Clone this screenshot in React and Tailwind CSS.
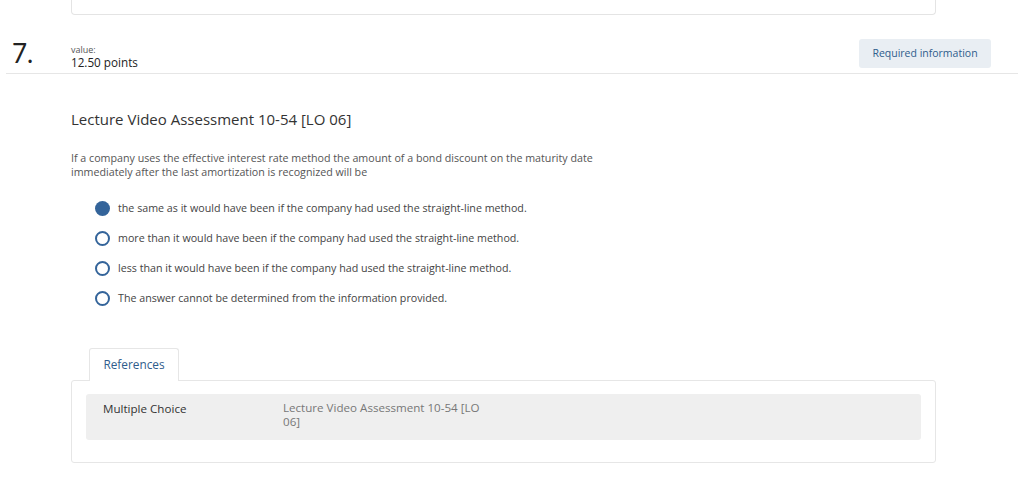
import React from "react";

const options = [
  "the same as it would have been if the company had used the straight-line method.",
  "more than it would have been if the company had used the straight-line method.",
  "less than it would have been if the company had used the straight-line method.",
  "The answer cannot be determined from the information provided.",
];

export default function App() {
  return (
    <div className="w-[1024px] h-[481px] overflow-hidden bg-white text-[#333]" style={{ fontFamily: "'Open Sans', Lato, sans-serif" }}>
      {/* top card remnant */}
      <div className="ml-[71px] w-[865px] h-[15px] border border-t-0 border-[#e4e4e4] rounded-b-[4px]" />

      {/* header row */}
      <div className="mx-[6px] mt-[24px] h-[35px] border-b border-[#e6e6e6] flex items-start">
        <div className="w-[65px] pl-[6px] text-[26px] leading-[27px] mt-[1px] text-[#222]" style={{ fontFamily: "Lato, sans-serif" }}>7.</div>
        <div className="flex-1 pt-[5px]">
          <div className="text-[9px] leading-[11px] text-[#555]">value:</div>
          <div className="text-[11.7px] leading-[14px] text-[#222]">12.50 points</div>
        </div>
        <div className="mr-[27px] h-[29px] w-[132px] rounded-[3px] bg-[#e9eef3] flex items-center justify-center text-[10.5px] text-[#2f5d8c]">
          Required information
        </div>
      </div>

      {/* question */}
      <div className="ml-[71px] mt-[36px]">
        <h2 className="text-[15px] leading-[18px] text-[#333]">Lecture Video Assessment 10-54 [LO 06]</h2>
        <p className="mt-[23px] w-[538px] text-[10.7px] leading-[14px] text-[#555]">
          If a company uses the effective interest rate method the amount of a bond discount on the maturity date immediately after the last amortization is recognized will be
        </p>
        <div className="mt-[21px] ml-[24px] flex flex-col gap-[14px]">
          {options.map((o, i) => (
            <div key={i} className="flex items-center h-[16px]">
              {i === 0 ? (
                <span className="w-[15px] h-[15px] rounded-full bg-[#34649a]" />
              ) : (
                <span className="w-[15px] h-[15px] rounded-full border-2 border-[#34649a] bg-white" />
              )}
              <span className="ml-[8px] text-[10.7px] text-[#444]">{o}</span>
            </div>
          ))}
        </div>
      </div>

      {/* references */}
      <div className="ml-[71px] mt-[41px] w-[865px]">
        <div className="ml-[18px] w-[90px] h-[33px] border border-b-0 border-[#e6e6e6] rounded-t-[3px] bg-white flex items-center justify-center text-[11.8px] text-[#2f5d8c] relative top-[1px]">
          References
        </div>
        <div className="border border-[#e6e6e6] rounded-[3px] px-[14px] pt-[13px] pb-[22px]">
          <div className="bg-[#efefef] rounded-[3px] h-[46px] flex pt-[7px]">
            <div className="w-[197px] pl-[17px] text-[11.6px] leading-[15px] text-[#333]">Multiple Choice</div>
            <div className="w-[208px] text-[11.6px] leading-[14px] text-[#777]">Lecture Video Assessment 10-54 [LO 06]</div>
          </div>
        </div>
      </div>
    </div>
  );
}
